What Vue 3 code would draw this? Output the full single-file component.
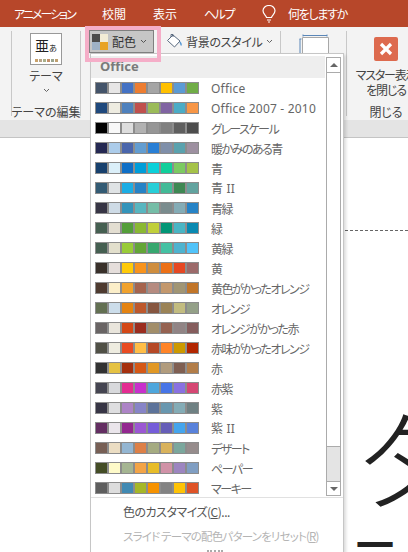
<template>
  <div class="app">
    <nav class="tabs">
      <span class="tab t1">アニメーション</span>
      <span class="tab t2">校閲</span>
      <span class="tab t3">表示</span>
      <span class="tab t4">ヘルプ</span>
      <span class="tab t-bulb">
        <svg width="14" height="18" viewBox="0 0 14 18" fill="none" stroke="#fff" stroke-width="1.2">
          <path d="M4.5 12.5C4.3 10.500 1 9 1 5.800a6 5.300 0 0 1 12 0C13 9 9.700 10.500 9.500 12.500z" />
          <path d="M5 15h4M6 17h2" />
        </svg>
      </span>
      <span class="tab t5">何をしますか</span>
    </nav>

    <section class="ribbon">
      <div class="group theme-group">
        <div class="theme-thumb">
          <span class="thumb-text">亜<small>あ</small></span>
          <span class="thumb-dots"><i v-for="c in thumbDots" :key="c" :style="{ background: c }"></i></span>
        </div>
        <span class="theme-label">テーマ</span>
        <svg class="chev" width="7" height="5" viewBox="0 0 7 5" fill="none" stroke="#666"><path d="M1 1l2.500 2.500L6 1" /></svg>
        <div class="group-name">テーマの編集</div>
      </div>

      <div class="group bg-group">
        <div class="bg-row">
          <button class="color-btn">
            <span class="color-icon"><i class="q1"></i><i class="q2"></i><i class="q3"></i><i class="q4"></i></span>
            <span>配色</span>
            <svg width="7" height="5" viewBox="0 0 7 5" fill="none" stroke="#555"><path d="M1 1l2.500 2.500L6 1" /></svg>
          </button>
          <div class="bg-style">
            <svg width="17" height="17" viewBox="0 0 17 17" fill="none" stroke="#5a6b80">
              <path d="M1.500 7.500 7 2l7 6-5.500 6z" fill="#fff" />
              <path d="M5 4V1.500h2V4" />
              <path d="M14 9c1 1.500 1.500 2.500 1 3.500" stroke="#5b9bd5" stroke-width="1.500" />
            </svg>
            <span>背景のスタイル</span>
            <svg width="7" height="5" viewBox="0 0 7 5" fill="none" stroke="#666"><path d="M1 1l2.500 2.500L6 1" /></svg>
          </div>
        </div>
      </div>

      <div class="group size-group">
        <svg class="size-icon" width="30" height="24" viewBox="0 0 30 24" fill="none">
          <path d="M3.500 3.500h26v21h-26z" fill="#fff" stroke="#a8a8a8" />
          <path d="M4 1.500h24M4 .5v2M28 .5v2M1 5v18M.5 5h2" stroke="#5b87b8" />
        </svg>
      </div>

      <div class="group close-group">
        <span class="close-icon">
          <svg width="14" height="14" viewBox="0 0 14 14" stroke="#fff" stroke-width="3.200"><path d="M2 2l10 10M12 2L2 12" /></svg>
        </span>
        <span class="close-label">マスター表示<br />を閉じる</span>
        <div class="group-name">閉じる</div>
      </div>
    </section>

    <div class="strip"></div>

    <main class="slide">
      <div class="guide"></div>
      <span class="big-glyph">タ</span>
      <span class="big-dash">一</span>
    </main>

    <div class="dropdown">
      <div class="list-area">
        <div class="list">
          <div class="list-head">Office</div>
          <div v-for="s in schemes" :key="s.name" class="scheme">
            <span class="swatches"><i v-for="(c, i) in s.colors" :key="i" :style="{ background: c }"></i></span>
            <span class="scheme-name" :class="{ latin: /[A-Z]/.test(s.name) }">{{ s.name }}</span>
          </div>
        </div>
        <div class="scrollbar">
          <div class="sb-btn"><b class="up"></b></div>
          <div class="sb-thumb"></div>
          <div class="sb-track"></div>
          <div class="sb-btn sb-down"><b class="down"></b></div>
        </div>
      </div>
      <div class="menu">
        <div class="menu-item">色のカスタマイズ(<u>C</u>)...</div>
        <div class="menu-item disabled">スライド テーマの配色パターンをリセット(<u>R</u>)</div>
        <div class="grip"></div>
      </div>
    </div>

    <!-- annotation drawn over the screenshot -->
    <div class="ring"></div>
  </div>
</template>

<script setup>
const thumbDots = ['#c9a26b', '#b9a58a', '#a8b08a', '#c28f6a', '#9aa58f', '#c0a070']

const schemes = [
  { name: 'Office', colors: ['#44546a', '#e7e6e6', '#4472c4', '#ed7d31', '#a5a5a5', '#ffc000', '#5b9bd5', '#70ad47'] },
  { name: 'Office 2007 - 2010', colors: ['#1f497d', '#eeece1', '#4f81bd', '#c0504d', '#9bbb59', '#8064a2', '#4bacc6', '#f79646'] },
  { name: 'グレースケール', colors: ['#000000', '#f8f8f8', '#dddddd', '#b2b2b2', '#969696', '#808080', '#5f5f5f', '#4d4d4d'] },
  { name: '暖かみのある青', colors: ['#242852', '#acccea', '#4a66ac', '#629dd1', '#297fd5', '#7f8fa9', '#5aa2ae', '#9d90a0'] },
  { name: '青', colors: ['#17406d', '#dbeff9', '#0f6fc6', '#009dd9', '#0bd0d9', '#10cf9b', '#7cca62', '#a5c249'] },
  { name: '青 II', colors: ['#335b74', '#dfe3e5', '#1cade4', '#2683c6', '#27ced7', '#42ba97', '#3e8853', '#62a39f'] },
  { name: '青緑', colors: ['#373545', '#cedbe6', '#3494ba', '#58b6c0', '#75bda7', '#7a8c8e', '#84acb6', '#2683c6'] },
  { name: '緑', colors: ['#455f51', '#e3ded1', '#549e39', '#8ab833', '#c0cf3a', '#029676', '#4ab5c4', '#0989b1'] },
  { name: '黄緑', colors: ['#455f51', '#e2dfcc', '#99cb38', '#63a537', '#37a76f', '#44c1a3', '#4eb3cf', '#51c3f9'] },
  { name: '黄', colors: ['#39302a', '#e5dedb', '#ffca08', '#f8931d', '#ce8d3e', '#ec7016', '#e64823', '#9c6a6a'] },
  { name: '黄色がかったオレンジ', colors: ['#4e3b30', '#fbeec9', '#f0a22e', '#a5644e', '#b58b80', '#c3986d', '#a19574', '#c17529'] },
  { name: 'オレンジ', colors: ['#637052', '#ccddea', '#e48312', '#bd582c', '#865640', '#9b8357', '#c2bc80', '#94a088'] },
  { name: 'オレンジがかった赤', colors: ['#696464', '#e9e5dc', '#d34817', '#9b2d1f', '#a28e6a', '#956251', '#918485', '#855d5d'] },
  { name: '赤味がかったオレンジ', colors: ['#505046', '#eeece0', '#e84c22', '#ffbd47', '#b64926', '#ff8427', '#cc9900', '#b22600'] },
  { name: '赤', colors: ['#323232', '#e5c243', '#a5300f', '#d55816', '#e19825', '#b19c7d', '#7f5f52', '#b27d49'] },
  { name: '赤紫', colors: ['#454551', '#d8d9dc', '#e32d91', '#c830cc', '#4ea6dc', '#4775e7', '#8971e1', '#d54773'] },
  { name: '紫', colors: ['#373545', '#dedee0', '#ad84c6', '#8784c7', '#5d739a', '#6997af', '#84acb6', '#6f8183'] },
  { name: '紫 II', colors: ['#632e62', '#eae5eb', '#92278f', '#9b57d3', '#755dd9', '#665eb8', '#45a5ed', '#5982db'] },
  { name: 'デザート', colors: ['#775f55', '#ebddc3', '#94b6d2', '#dd8047', '#a5ab81', '#d8b25c', '#7ba79d', '#968c8c'] },
  { name: 'ペーパー', colors: ['#444d26', '#fefac9', '#a5b592', '#f3a447', '#e7bc29', '#d092a7', '#9c85c0', '#809ec2'] },
  { name: 'マーキー', colors: ['#5e5e5e', '#dddddd', '#418ab3', '#a6b727', '#f69200', '#838383', '#fec306', '#df5327'] }
]
</script>

<style>
html, body { margin: 0; padding: 0; overflow: hidden; }
</style>

<style scoped>
.app { width: 408px; height: 552px; position: relative; overflow: hidden; display: flex; flex-direction: column; background: #fff; font-family: "Noto Sans CJK JP", "Liberation Sans", sans-serif; font-feature-settings: "palt"; color: #444; }

/* tab bar */
.tabs { height: 27px; flex: none; background: #b7472a; color: #fff; display: flex; align-items: center; font-size: 12px; padding-left: 14px; box-sizing: border-box; }
.tab { white-space: nowrap; }
.t1 { width: 88px; letter-spacing: -2px; }
.t2, .t3 { width: 51px; }
.t4 { width: 58px; letter-spacing: -1.5px; }
.t-bulb { width: 26px; display: flex; }
.t5 { letter-spacing: -1.3px; }

/* ribbon */
.ribbon { height: 93px; flex: none; box-sizing: border-box; padding: 4px 0 0 11px; background: #f3f3f3; display: flex; }
.group { height: 85px; box-sizing: border-box; display: flex; flex-direction: column; border-right: 1px solid #c8c8c8; }
.theme-group { width: 70px; padding-top: 2px; border-left: 1px solid #c8c8c8; align-items: center; }
.theme-thumb { width: 32px; height: 32px; border: 1px solid #999; background: #fff; display: flex; flex-direction: column; align-items: center; box-sizing: border-box; }
.thumb-text { font-size: 14px; line-height: 18px; color: #222; margin-top: 2px; white-space: nowrap; }
.thumb-text small { font-size: 8px; }
.thumb-dots { display: flex; gap: 1px; margin-top: 2px; }
.thumb-dots i { width: 3px; height: 3px; display: block; }
.theme-label { font-size: 12px; line-height: 16px; margin-top: 3px; }
.chev { margin-top: 4px; }
.group-name { font-size: 12px; line-height: 14px; margin-top: auto; margin-bottom: -3px; white-space: nowrap; text-align: center; }
.bg-group { width: 200px; }
.bg-row { display: flex; align-items: center; margin: -1px 0 0 8px; }
.color-btn { width: 65px; height: 23px; box-sizing: border-box; border: 1px solid #808080; background: #c6c6c6; padding: 0 0 0 2px; display: flex; align-items: center; font: inherit; font-size: 12px; color: #333; gap: 4px; }
.color-icon { width: 16px; height: 16px; display: grid; grid-template-columns: 1fr 1fr; }
.color-icon i { display: block; }
.q1 { background: #4b4b4b; }
.q2 { background: #f3ecd6; }
.q3 { background: #9eb1c6; }
.q4 { background: #e8a325; }
.bg-style { display: flex; align-items: center; gap: 3px; font-size: 12px; margin-left: 12px; white-space: nowrap; letter-spacing: -0.3px; }
.size-group { width: 66px; padding: 3px 0 0 18px; }
.size-icon { display: block; }
.close-group { border-right: 0; width: 60px; padding: 6px 0 0 18px; align-items: center; }
.close-icon { width: 24px; height: 24px; flex: none; border-radius: 2px; background: #dd6a4e; display: flex; align-items: center; justify-content: center; }
.close-label { font-size: 12px; line-height: 15px; text-align: center; white-space: nowrap; margin-top: 6px; letter-spacing: -1.2px; }

.strip { height: 18px; flex: none; background: #e4e4e4; border-bottom: 1px solid #c4c4c4; box-sizing: border-box; }

/* slide */
.slide { flex: 1; background: #fff; position: relative; overflow: hidden; }
.guide { position: absolute; left: 100px; right: 0; top: 92px; border-top: 1px dashed #666; }
.big-glyph { position: absolute; left: 358px; top: 262px; font-size: 110px; line-height: 1; color: #222; font-weight: 300; }
.big-dash { position: absolute; left: 356px; top: 395px; font-size: 38px; line-height: 20px; color: #222; font-weight: 700; }

/* colour scheme gallery */
.dropdown { position: absolute; left: 90px; top: 53px; width: 254px; height: 499px; box-sizing: border-box; background: #fff; border: 1px solid #c6c6c6; border-bottom: 0; box-shadow: 2px 2px 3px rgba(0,0,0,.14); display: flex; flex-direction: column; }
.list-area { display: flex; gap: 1px; height: 444px; flex: none; padding: 2px 2px 0 0; box-sizing: border-box; border-bottom: 1px solid #e1e1e1; }
.list { flex: 1; min-width: 0; }
.list-head { height: 22px; background: #eeeeee; font-size: 13px; font-weight: 700; color: #7a7a7a; padding-left: 9px; line-height: 20px; font-family: "Noto Sans", sans-serif; }
.scheme { height: 20px; display: flex; align-items: center; padding-left: 4px; }
.swatches { display: flex; gap: 2px; background: #8c8c8c; padding: 1px; height: 10px; }
.swatches i { width: 11px; height: 10px; display: block; }
.scheme-name { margin-left: 12px; font-size: 12px; color: #666; white-space: nowrap; letter-spacing: -1.5px; }
.scheme-name.latin { font-family: "Noto Sans", "Noto Sans CJK JP", sans-serif; letter-spacing: 0.2px; }
.scrollbar { width: 15px; height: 439px; flex: none; margin-top: 1px; box-sizing: border-box; border: 1px solid #ababab; display: flex; flex-direction: column; background: #e4e4e4; }
.sb-btn { height: 14px; flex: none; box-sizing: border-box; background: #fff; display: flex; align-items: center; justify-content: center; }
.sb-down { border-top: 1px solid #ababab; }
.sb-thumb { height: 375px; flex: none; box-sizing: border-box; background: #fff; border-top: 1px solid #ababab; border-bottom: 1px solid #ababab; }
.sb-track { flex: 1; }
.up, .down { width: 0; height: 0; border-left: 4px solid transparent; border-right: 4px solid transparent; }
.up { border-bottom: 4px solid #666; }
.down { border-top: 4px solid #666; }
.menu { flex: 1; display: flex; flex-direction: column; padding-top: 2px; }
.menu-item { height: 24px; line-height: 24px; padding-left: 32px; font-size: 12px; color: #555; white-space: nowrap; letter-spacing: -0.5px; }
.menu-item.disabled { color: #b4b4b4; font-size: 11.5px; letter-spacing: -0.8px; line-height: 25px; }
.grip { width: 16px; margin: 2px auto 0 116px; border-top: 2px dotted #aaa; }

/* pink highlight */
.ring { position: absolute; left: 85px; top: 26px; width: 76px; height: 36px; box-sizing: border-box; border: 4px solid #f5aec8; pointer-events: none; }
</style>
